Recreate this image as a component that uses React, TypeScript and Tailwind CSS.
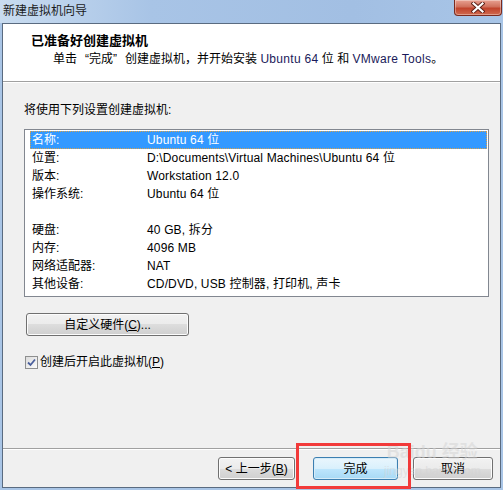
import React from "react"

const rows: [string, string][] = [
	["名称:", "Ubuntu 64 位"],
	["位置:", "D:\\Documents\\Virtual Machines\\Ubuntu 64 位"],
	["版本:", "Workstation 12.0"],
	["操作系统:", "Ubuntu 64 位"],
	["", ""],
	["硬盘:", "40 GB, 拆分"],
	["内存:", "4096 MB"],
	["网络适配器:", "NAT"],
	["其他设备:", "CD/DVD, USB 控制器, 打印机, 声卡"]
]

const btn =
	"h-[23px] rounded-[3px] border border-[#707070] bg-[linear-gradient(#f2f2f2,#ebebeb_50%,#dddddd_50%,#cfcfcf)] shadow-[inset_0_0_0_1px_#fcfcfc] flex items-center justify-center text-[12px] text-black"

function CloseButton() {
	return (
		<div className="mr-[1px] w-[48px] h-[16px] rounded-b-[4px] border border-t-0 border-[#7a2a1e] bg-[linear-gradient(#e8a192,#d0705c_45%,#c1432c_55%,#d06a4f)] shadow-[inset_0_0_0_1px_rgba(255,255,255,0.35)] flex items-center justify-center">
			<svg width="14" height="11" viewBox="0 0 14 11">
				<path d="M2.5 1.5 L11.5 9.5 M11.5 1.5 L2.5 9.5" stroke="#5a1f16" strokeWidth="4" strokeLinecap="square" />
				<path d="M2.5 1.5 L11.5 9.5 M11.5 1.5 L2.5 9.5" stroke="#ffffff" strokeWidth="2.2" strokeLinecap="square" />
			</svg>
		</div>
	)
}

function CheckBox() {
	return (
		<div className="w-[13px] h-[13px] border border-[#8e8f8f] bg-[linear-gradient(135deg,#dcdcdc,#fbfbfb)] p-[1px] flex items-center justify-center">
			<svg width="9" height="9" viewBox="0 0 9 9">
				<path d="M1 4.5 L3.5 7 L8 1.5" fill="none" stroke="#4a5f9c" strokeWidth="1.8" />
			</svg>
		</div>
	)
}

export default function App() {
	return (
		<div className="relative w-[503px] h-[490px] overflow-hidden bg-[#a9c5e6] flex flex-col font-['Liberation_Sans','Noto_Sans_CJK_SC',sans-serif] text-[12px] text-black">
			{/* Title bar */}
			<div className="h-[23px] shrink-0 flex items-start justify-between bg-[linear-gradient(90deg,#c9dcf0,#a8c4e6_30%,#a2bfe3_70%,#a8c5e7)]">
				<span className="pl-[3px] pt-[3px] leading-[16px] text-[12px] text-[#1b1b1b]">新建虚拟机向导</span>
				<CloseButton />
			</div>

			{/* Client area */}
			<div className="flex-1 mx-[2px] mb-[2px] border border-[#5a6b80] bg-[#f0f0f0] flex flex-col">
				{/* Header */}
				<div className="h-[58px] shrink-0 bg-white border-b border-[#a0a0a0] pt-[8px]">
					<div className="pl-[28px] leading-[18px] text-[13px] font-bold">已准备好创建虚拟机</div>
					<div className="pl-[50px] leading-[18px] whitespace-nowrap">
						单击<span className="inline-block w-[12px] text-right">“</span>完成<span className="inline-block w-[12px]">”</span>创建虚拟机，并开始安装{" "}
						<span className="text-[#1a1a5a] tracking-[0.3px]">Ubuntu 64</span> 位 和{" "}
						<span className="text-[#1a1a5a] tracking-[0.3px]">VMware Tools</span>。
					</div>
				</div>

				{/* Body */}
				<div className="flex-1 pl-[21px] pt-[18px] border-t border-white">
					<div className="leading-[18px]">将使用下列设置创建虚拟机:</div>
					<div className="mt-[10px] w-[465px] h-[168px] border border-[#828790] bg-white pt-[1px] pl-[5px] pr-[1px]">
						{rows.map(([label, value], i) => (
							<div
								key={i}
								className={`h-[18px] flex items-center ${
									i === 0
										? "bg-[#3399ff] text-white border border-dotted border-[#d9a14a]"
										: "border border-transparent"
								}`}
							>
								<span className="w-[116px] pl-[1px]">{label}</span>
								<span className="tracking-[0.15px]">{value}</span>
							</div>
						))}
					</div>

					<div className={`${btn} mt-[16px] ml-[2px] w-[163px]`}>
						自定义硬件(<span className="underline">C</span>)...
					</div>

					<div className="mt-[17px] ml-[1px] h-[18px] flex items-center gap-[2px]">
						<CheckBox />
						<span>
							创建后开启此虚拟机(<span className="underline">P</span>)
						</span>
					</div>
				</div>

				{/* Footer */}
				<div className="h-[39px] shrink-0 border-t border-[#a0a0a0] shadow-[inset_0_1px_0_#ffffff] flex items-start justify-end pt-[8px] pr-[7px]">
					<div className={`${btn} w-[77px]`}>
						&lt; 上一步(<span className="underline">B</span>)
					</div>
					<div className="ml-[18px] w-[85px] h-[23px] rounded-[3px] border border-[#3c7fb1] bg-[linear-gradient(#eaf6fd,#d9f0fc_50%,#bee6fd_50%,#a7d9f5)] shadow-[inset_0_0_0_1px_#d6ecf8] flex items-center justify-center">
						完成
					</div>
					<div className={`${btn} ml-[15px] w-[80px]`}>取消</div>
				</div>
			</div>

			{/* Baidu watermark */}
			<div className="absolute left-[384px] top-[443px] flex flex-col items-center pointer-events-none text-[#d4d4d4] opacity-50">
				<span className="text-[18px] leading-[18px] font-bold">Baidu 经验</span>
				<span className="text-[12px] leading-[16px] mt-[2px]">jingyan.baidu.com</span>
			</div>

			{/* Red highlight */}
			<div className="absolute left-[296px] top-[443px] w-[115px] h-[46px] border-[3px] border-[#f23a3a] pointer-events-none" />
		</div>
	)
}
